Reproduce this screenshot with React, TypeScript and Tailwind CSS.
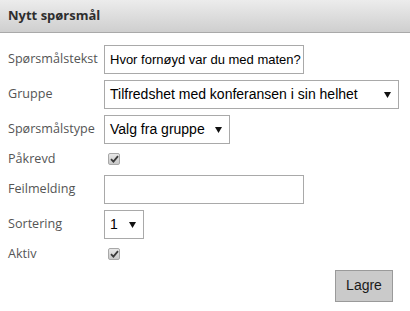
import React from "react";

function Check() {
  return (
    <span className="flex h-[12px] w-[12px] items-center justify-center rounded-[2px] border border-[#a8a8a8] bg-gradient-to-b from-[#e8e8e8] to-[#c8c8c8]">
      <svg width="9" height="8" viewBox="0 0 9 8">
        <path d="M1 4.2 L3.4 6.6 L8 1.2" fill="none" stroke="#3a3a3a" strokeWidth="1.8" />
      </svg>
    </span>
  );
}

function Arrow() {
  return (
    <svg width="7" height="7" viewBox="0 0 7 7" className="shrink-0">
      <path d="M0 1 L7 1 L3.5 7 Z" fill="#111" />
    </svg>
  );
}

function Label({ children }: { children: React.ReactNode }) {
  return (
    <div className="flex items-center whitespace-nowrap font-['Open_Sans',sans-serif] text-[12.6px] text-[#555]">
      {children}
    </div>
  );
}

export default function App() {
  return (
    <div className="h-[311px] w-[410px] bg-white font-['Liberation_Sans',Arial,sans-serif]">
      <div className="flex h-[33px] items-center border-b border-[#a9a9a9] bg-gradient-to-b from-[#ececec] to-[#cfcfcf] px-[8px]">
        <span className="font-['Open_Sans',sans-serif] text-[13px] font-bold text-[#2e2e2e]">Nytt spørsmål</span>
      </div>
      <div className="grid grid-cols-[96px_1fr] gap-y-[6px] pl-[8px] pt-[12px]">
        <Label>Spørsmålstekst</Label>
        <div className="flex h-[29px] w-[200px] items-center overflow-hidden whitespace-nowrap border border-[#a9a9a9] pl-[5px] text-[13px] text-black">
          Hvor fornøyd var du med maten?
        </div>

        <Label>Gruppe</Label>
        <div className="flex h-[29px] w-[295px] items-center justify-between whitespace-nowrap border border-[#a9a9a9] pl-[5px] pr-[7px] text-[14px] text-black">
          <span>Tilfredshet med konferansen i sin helhet</span>
          <Arrow />
        </div>

        <Label>Spørsmålstype</Label>
        <div className="flex h-[29px] w-[126px] items-center justify-between whitespace-nowrap border border-[#a9a9a9] pl-[5px] pr-[7px] text-[14px] text-black">
          <span>Valg fra gruppe</span>
          <Arrow />
        </div>

        <Label>Påkrevd</Label>
        <div className="flex h-[18px] items-center pl-[4px]">
          <Check />
        </div>

        <Label>Feilmelding</Label>
        <div className="h-[29px] w-[200px] border border-[#a9a9a9]" />

        <Label>Sortering</Label>
        <div className="flex h-[29px] w-[40px] items-center justify-between border border-[#a9a9a9] pl-[5px] pr-[7px] text-[14px] text-black">
          <span>1</span>
          <Arrow />
        </div>

        <Label>Aktiv</Label>
        <div className="flex h-[18px] items-center pl-[4px]">
          <Check />
        </div>
      </div>
      <div className="mt-[6px] flex justify-end pr-[17px]">
        <button className="h-[32px] w-[58px] border border-[#9a9a9a] bg-[#cacaca] text-[14px] text-[#1a1a1a]">
          Lagre
        </button>
      </div>
    </div>
  );
}
